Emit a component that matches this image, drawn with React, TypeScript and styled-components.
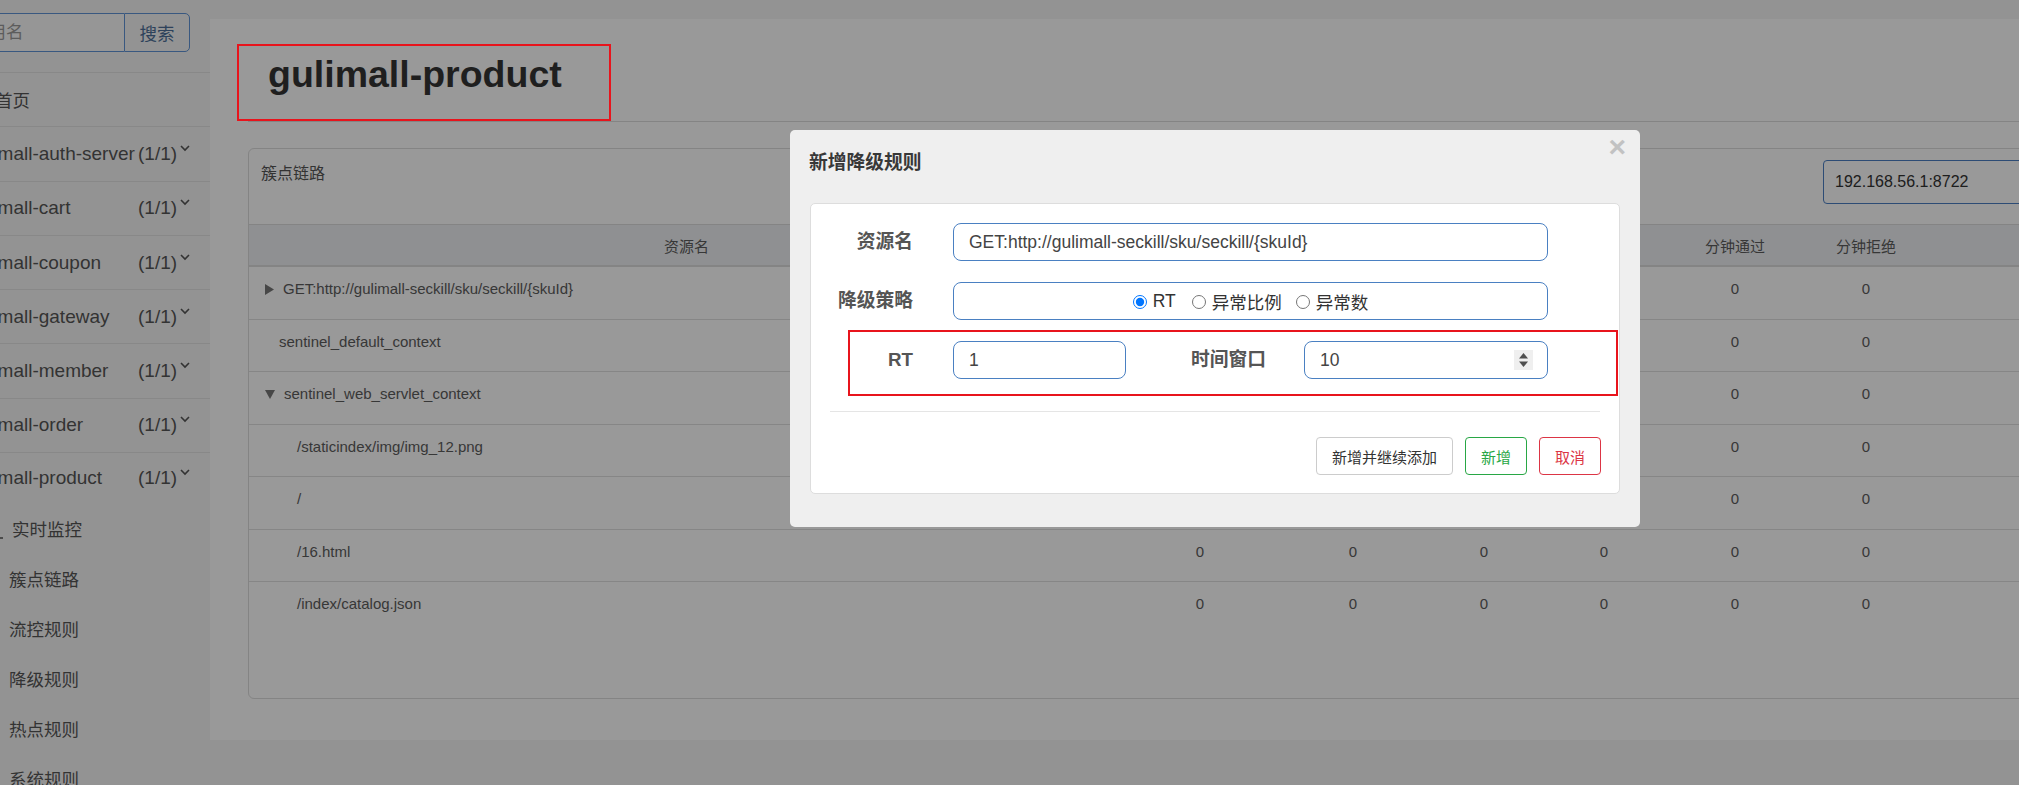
import React from "react";
import styled, { createGlobalStyle } from "styled-components";

const FONT = `"Liberation Sans", "Noto Sans CJK SC", sans-serif`;

const GlobalStyle = createGlobalStyle`
  html, body { margin: 0; padding: 0; }
  body { font-family: ${FONT}; overflow: hidden; background: #f5f5f5; }
  * { box-sizing: border-box; }
`;

const Page = styled.div`
  position: relative;
  display: flex;
  width: 2019px;
  height: 785px;
  overflow: hidden;
  background: #f5f5f5;
  font-family: ${FONT};
`;

/* ---------- sidebar ---------- */
const Sidebar = styled.aside`
  width: 210px;
  flex-shrink: 0;
  padding-top: 13px;
  background: #f5f5f5;
  overflow: hidden;
`;

const SearchGroup = styled.div`
  display: flex;
  height: 39px;
  margin: 0 0 20px -40px;
`;

const SearchInput = styled.input`
  width: 164px;
  height: 39px;
  padding: 0 10px;
  border: 1px solid #5f93d6;
  border-right: none;
  border-radius: 4px 0 0 4px;
  background: #fafafa;
  font: 17.5px ${FONT};
  color: #555;
  outline: none;
  &::placeholder { color: #9a9a9a; }
`;

const SearchButton = styled.button`
  width: 66px;
  height: 39px;
  padding: 0;
  border: 1px solid #5f93d6;
  border-radius: 0 5px 5px 0;
  background: #f5f5f5;
  font: 17.5px ${FONT};
  color: #4d6f98;
`;

const NavList = styled.ul`
  list-style: none;
  margin: 0;
  padding: 0;
  border-top: 1px solid #e3e3e3;
`;

const NavRow = styled.li<{ $last?: boolean }>`
  display: flex;
  align-items: center;
  height: ${(p) => (p.$last ? "50.5px" : "54.3px")};
  padding-bottom: ${(p) => (p.$last ? "0" : "0")};
  border-bottom: ${(p) => (p.$last ? "none" : "1px solid #e3e3e3")};
  font-size: 19px;
  color: #555;
  white-space: nowrap;
`;

const HomeLabel = styled.span`
  margin-left: -5px;
  font-size: 17.5px;
`;

const AppName = styled.span`
  flex-shrink: 0;
  width: 170px;
  margin-left: -32px;
`;

const Count = styled.span`
  flex-shrink: 0;
`;

const Chevron = styled.svg`
  flex-shrink: 0;
  margin: -11px 0 0 3px;
`;

const SubItem = styled.li<{ $indent: number }>`
  display: flex;
  align-items: center;
  height: 50px;
  padding-left: ${(p) => p.$indent}px;
  font-size: 17.5px;
  color: #555;
  white-space: nowrap;
`;

const SubIcon = styled.svg`
  flex-shrink: 0;
  margin: 8px 9px 0 -23px;
`;

/* ---------- main ---------- */
const Main = styled.main`
  flex: 1;
  min-width: 0;
  padding-top: 19px;
`;

const Content = styled.div`
  height: 721px;
  padding-top: 25px;
  background: #fff;
  overflow: hidden;
`;

const TitleBox = styled.div`
  position: relative;
  z-index: 30;
  width: 374px;
  height: 77px;
  margin-left: 27px;
  padding: 7px 0 0 29px;
  border: 2px solid #e8141c;
`;

const PageTitle = styled.h1`
  margin: 0;
  font: bold 37.5px/42px ${FONT};
  color: #1f1f1f;
`;

const HeaderRule = styled.div`
  height: 1px;
  margin-left: 38px;
  background: #dddddd;
`;

const Card = styled.section`
  width: 1900px;
  height: 551px;
  margin: 26px 0 0 38px;
  border: 1px solid #dcdcdc;
  border-radius: 6px;
  overflow: hidden;
`;

const CardHeader = styled.div`
  display: flex;
  align-items: flex-start;
  height: 75px;
  padding: 0 24px 0 12px;
`;

const CardTitle = styled.span`
  margin-top: 15px;
  font-size: 16px;
  line-height: 20px;
  color: #555;
`;

const MachineSelect = styled.div`
  display: flex;
  align-items: center;
  width: 300px;
  height: 44px;
  margin: 11px 0 0 auto;
  padding-left: 11px;
  border: 1px solid #4b7fc4;
  border-radius: 4px;
  font-size: 16px;
  color: #333;
`;

const COLS = "875px 152px 154px 108px 132px 130px 132px 1fr";

const HeadRow = styled.div`
  display: grid;
  grid-template-columns: ${COLS};
  height: 43px;
  border-top: 1px solid #dddddd;
  border-bottom: 2px solid #dddddd;
  background: #eff1f4;
`;

const BodyRow = styled.div<{ $last?: boolean }>`
  display: grid;
  grid-template-columns: ${COLS};
  height: 52.5px;
  border-bottom: ${(p) => (p.$last ? "none" : "1px solid #e0e0e0")};
`;

const Cell = styled.div`
  padding-top: 12px;
  font-size: 15px;
  line-height: 20px;
  color: #5c5c5c;
  text-align: center;
  white-space: nowrap;
`;

const NameCell = styled(Cell)<{ $indent: number }>`
  display: flex;
  align-items: center;
  align-self: start;
  gap: 9px;
  height: 32px;
  padding-left: ${(p) => p.$indent}px;
  text-align: left;
`;

/* ---------- modal ---------- */
const Overlay = styled.div`
  position: absolute;
  inset: 0;
  z-index: 10;
  background: rgba(0, 0, 0, 0.4);
`;

const Modal = styled.div`
  position: absolute;
  left: 790px;
  top: 130px;
  z-index: 20;
  width: 850px;
  height: 397px;
  padding: 22px 20px 0;
  border-radius: 5px;
  background: #efefef;
`;

const ModalTitle = styled.h4`
  margin: 0 0 0 -1px;
  font: bold 18.75px/22px ${FONT};
  color: #383838;
`;

const CloseMark = styled.span`
  position: absolute;
  right: 14px;
  top: 2px;
  font: bold 30px/30px ${FONT};
  color: #c2c2c2;
`;

const FormPanel = styled.div`
  width: 810px;
  margin-top: 29px;
  padding: 19px 0 18px;
  border: 1px solid #dddddd;
  border-radius: 5px;
  background: #fff;
`;

const FormRow = styled.div<{ $gapTop?: number }>`
  display: flex;
  align-items: center;
  margin-top: ${(p) => p.$gapTop ?? 0}px;
`;

const Label = styled.label<{ $w: number; $gap: number }>`
  flex-shrink: 0;
  width: ${(p) => p.$w}px;
  margin-right: ${(p) => p.$gap}px;
  text-align: right;
  font: bold 18.75px/24px ${FONT};
  color: #555;
`;

const Field = styled.div<{ $w: number; $center?: boolean }>`
  display: flex;
  align-items: center;
  justify-content: ${(p) => (p.$center ? "center" : "flex-start")};
  width: ${(p) => p.$w}px;
  height: 38px;
  border: 1px solid #4a80c2;
  border-radius: 8px;
  background: #fff;
`;

const FieldInput = styled.input`
  flex: 1;
  min-width: 0;
  height: 100%;
  padding: 0 0 0 15px;
  border: none;
  background: transparent;
  outline: none;
  font: 17.5px ${FONT};
  color: #444;
  &::-webkit-inner-spin-button,
  &::-webkit-outer-spin-button { -webkit-appearance: none; margin: 0; }
`;

const Spinner = styled.svg`
  flex-shrink: 0;
  margin: 0 14px 0 4px;
`;

const RadioOption = styled.label<{ $gap: number }>`
  display: inline-flex;
  align-items: center;
  gap: 6px;
  margin-left: ${(p) => p.$gap}px;
  font-size: 17.5px;
  color: #333;
  input { width: 14px; height: 14px; margin: 2px 0 0; }
`;

const Highlight = styled.div`
  display: flex;
  align-items: center;
  margin: 10px 1px 0 37px;
  padding: 9px 0 15px;
  border: 2px solid #e8141c;
`;

const Divider = styled.div`
  height: 1px;
  margin: 15px 19px 0;
  background: #e5e5e5;
`;

const ButtonBar = styled.div`
  display: flex;
  justify-content: flex-end;
  gap: 12px;
  margin-top: 25px;
  padding-right: 18px;
`;

const Btn = styled.button<{ $tone: "default" | "success" | "danger" }>`
  height: 38px;
  padding: 0 15px;
  border-radius: 4px;
  background: #fff;
  font: 15px ${FONT};
  border: 1px solid
    ${(p) => (p.$tone === "success" ? "#28a745" : p.$tone === "danger" ? "#dc3545" : "#cccccc")};
  color: ${(p) => (p.$tone === "success" ? "#28a745" : p.$tone === "danger" ? "#dc3545" : "#333")};
`;

/* ---------- data ---------- */
const apps = [
  "gulimall-auth-server",
  "gulimall-cart",
  "gulimall-coupon",
  "gulimall-gateway",
  "gulimall-member",
  "gulimall-order",
  "gulimall-product",
];

const subMenu = ["实时监控", "簇点链路", "流控规则", "降级规则", "热点规则", "系统规则"];

const headers = ["资源名", "通过QPS", "拒绝QPS", "并发数", "平均RT", "分钟通过", "分钟拒绝", "操作"];

type Row = { name: string; indent: number; arrow?: "right" | "down" };
const rows: Row[] = [
  { name: "GET:http://gulimall-seckill/sku/seckill/{skuId}", indent: 16, arrow: "right" },
  { name: "sentinel_default_context", indent: 30 },
  { name: "sentinel_web_servlet_context", indent: 16, arrow: "down" },
  { name: "/staticindex/img/img_12.png", indent: 48 },
  { name: "/", indent: 48 },
  { name: "/16.html", indent: 48 },
  { name: "/index/catalog.json", indent: 48 },
];

const Arrow = ({ dir }: { dir: "right" | "down" }) =>
  dir === "right" ? (
    <svg width="9" height="11" viewBox="0 0 9 11">
      <polygon points="0,0 9,5.5 0,11" fill="#777" />
    </svg>
  ) : (
    <svg width="10" height="9" viewBox="0 0 10 9">
      <polygon points="0,0 10,0 5,9" fill="#777" />
    </svg>
  );

export default function App() {
  return (
    <>
      <GlobalStyle />
      <Page>
        <Sidebar>
          <SearchGroup>
            <SearchInput placeholder="应用名" />
            <SearchButton>搜索</SearchButton>
          </SearchGroup>
          <NavList>
            <NavRow>
              <HomeLabel>首页</HomeLabel>
            </NavRow>
            {apps.map((a, i) => (
              <NavRow key={a} $last={i === apps.length - 1}>
                <AppName>{a}</AppName>
                <Count>(1/1)</Count>
                <Chevron width="10" height="7" viewBox="0 0 10 7">
                  <polyline points="1,1 5,5 9,1" fill="none" stroke="#555" strokeWidth="1.6" />
                </Chevron>
              </NavRow>
            ))}
            {subMenu.map((s, i) => (
              <SubItem key={s} $indent={i === 0 ? 12 : 9}>
                {i === 0 && (
                  <SubIcon width="14" height="12" viewBox="0 0 14 12">
                    <polyline points="1,0 1,11 14,11" fill="none" stroke="#555" strokeWidth="1.4" />
                  </SubIcon>
                )}
                {s}
              </SubItem>
            ))}
          </NavList>
        </Sidebar>

        <Main>
          <Content>
            <TitleBox>
              <PageTitle>gulimall-product</PageTitle>
            </TitleBox>
            <HeaderRule />
            <Card>
              <CardHeader>
                <CardTitle>簇点链路</CardTitle>
                <MachineSelect>192.168.56.1:8722</MachineSelect>
              </CardHeader>
              <HeadRow>
                {headers.map((h) => (
                  <Cell key={h}>{h}</Cell>
                ))}
              </HeadRow>
              {rows.map((r, i) => (
                <BodyRow key={r.name} $last={i === rows.length - 1}>
                  <NameCell $indent={r.indent}>
                    {r.arrow && <Arrow dir={r.arrow} />}
                    <span>{r.name}</span>
                  </NameCell>
                  {[0, 1, 2, 3, 4, 5].map((k) => (
                    <Cell key={k}>0</Cell>
                  ))}
                  <Cell />
                </BodyRow>
              ))}
            </Card>
          </Content>
        </Main>

        <Overlay />

        <Modal>
          <ModalTitle>新增降级规则</ModalTitle>
          <CloseMark>×</CloseMark>
          <FormPanel>
            <FormRow>
              <Label $w={102} $gap={40}>资源名</Label>
              <Field $w={595}>
                <FieldInput defaultValue="GET:http://gulimall-seckill/sku/seckill/{skuId}" />
              </Field>
            </FormRow>
            <FormRow $gapTop={21}>
              <Label $w={102} $gap={40}>降级策略</Label>
              <Field $w={595} $center>
                <RadioOption $gap={0}>
                  <input type="radio" name="grade" defaultChecked />
                  RT
                </RadioOption>
                <RadioOption $gap={16}>
                  <input type="radio" name="grade" />
                  异常比例
                </RadioOption>
                <RadioOption $gap={14}>
                  <input type="radio" name="grade" />
                  异常数
                </RadioOption>
              </Field>
            </FormRow>
            <Highlight>
              <Label $w={63} $gap={40}>RT</Label>
              <Field $w={173}>
                <FieldInput defaultValue="1" />
              </Field>
              <Label $w={140} $gap={38}>时间窗口</Label>
              <Field $w={244}>
                <FieldInput type="number" defaultValue={10} />
                <Spinner width="19" height="20" viewBox="0 0 19 20">
                  <rect width="19" height="20" fill="#efefef" />
                  <polygon points="5,8.5 9.5,3 14,8.5" fill="#4f4f4f" />
                  <polygon points="5,11.5 9.5,17 14,11.5" fill="#4f4f4f" />
                </Spinner>
              </Field>
            </Highlight>
            <Divider />
            <ButtonBar>
              <Btn $tone="default">新增并继续添加</Btn>
              <Btn $tone="success">新增</Btn>
              <Btn $tone="danger">取消</Btn>
            </ButtonBar>
          </FormPanel>
        </Modal>
      </Page>
    </>
  );
}
